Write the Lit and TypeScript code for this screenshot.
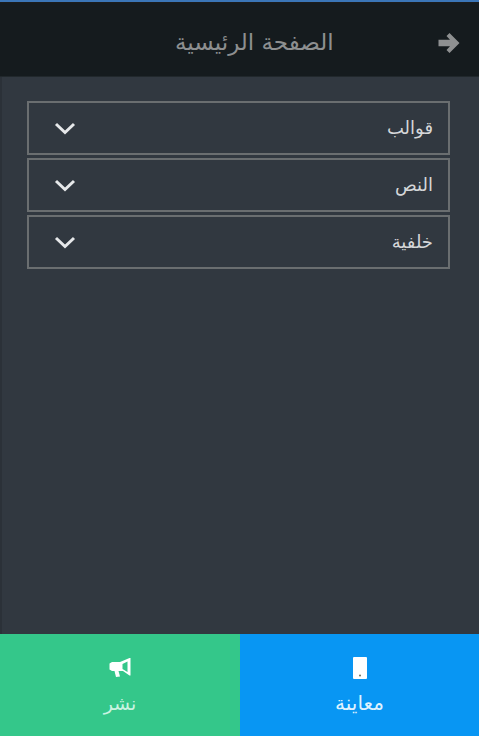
import { LitElement, html, css } from "lit";
import { customElement } from "lit/decorators.js";

const items = ["قوالب", "النص", "خلفية"];

@customElement("app-root")
export class AppRoot extends LitElement {
  static styles = css`
    :host {
      display: flex;
      flex-direction: column;
      height: 736px;
      width: 479px;
      overflow: hidden;
      background: #313840;
      font-family: "DejaVu Sans", "Noto Sans", sans-serif;
    }
    .topline {
      height: 2px;
      background: #3b76b8;
      flex: none;
      border-bottom: 1px solid #1c1d1d;
    }
    header {
      flex: none;
      height: 69px;
      background: #151b1e;
      border-bottom: 1px solid #21282c;
      display: flex;
      align-items: center;
      justify-content: space-between;
      padding: 4px 19px 0 175px;
    }
    header svg {
      margin-top: 3px;
    }
    .title {
      color: #8d8f90;
      font-size: 23px;
      line-height: 36px;
      white-space: nowrap;
    }
    main {
      flex: 1;
      padding: 24px 29px 0 25px;
      display: flex;
      flex-direction: column;
      gap: 3px;
      border-left: 2px solid #2b3138;
    }
    .row {
      height: 50px;
      border: 2px solid #6a6e70;
      display: flex;
      align-items: center;
      justify-content: space-between;
      padding: 0 15px 0 25px;
    }
    .row span {
      color: #d5d7d9;
      font-size: 18px;
      line-height: 26px;
    }
    footer {
      flex: none;
      height: 102px;
      display: flex;
    }
    .btn {
      flex: none;
      display: flex;
      flex-direction: column;
      align-items: center;
      padding-top: 21px;
      box-sizing: border-box;
    }
    .pub { width: 240px; background: #34c78a; color: #c9f3e1; }
    .pre { width: 239px; background: #0896f3; color: #dff2ff; }
    .icon { height: 26px; display: flex; align-items: center; justify-content: center; }
    .label { font-size: 19px; line-height: 28px; margin-top: 8px; }
    .pre .label { font-size: 20px; }
  `;

  render() {
    return html`
      <div class="topline"></div>
      <header>
        <span class="title" dir="rtl">الصفحة الرئيسية</span>
        <svg width="22" height="22" viewBox="0 0 22 22" aria-hidden="true">
          <path d="M11.5 1 L21.5 11 L11.5 21 L8.5 18 L12 14.2 H0.5 V7.8 H12 L8.5 4 Z" fill="#8e9091"/>
        </svg>
      </header>
      <main>
        ${items.map(
          (t) => html`<div class="row">
            <svg width="22" height="14" viewBox="0 0 22 14" aria-hidden="true">
              <path d="M2 3 L11 11.5 L20 3" fill="none" stroke="#e6e8ea" stroke-width="3"/>
            </svg>
            <span dir="rtl">${t}</span>
          </div>`
        )}
      </main>
      <footer>
        <div class="btn pub">
          <div class="icon">
            <svg width="22" height="22" viewBox="0 0 22 22" aria-hidden="true">
              <path d="M20.5 1 L21.5 1 V18.5 L20.5 18.5 L14 14 H9.5 L11 19.5 L7 20 L5.5 14 H3 L0.5 12.5 V6.5 L3 5 H11 Z M18.5 4.5 L13.5 7 V12 L18.5 15 Z" fill="#fff" fill-rule="evenodd"/>
            </svg>
          </div>
          <div class="label" dir="rtl">نشر</div>
        </div>
        <div class="btn pre">
          <div class="icon">
            <svg width="14" height="22" viewBox="0 0 14 22" aria-hidden="true">
              <path d="M1 0 H13 A1 1 0 0 1 14 1 V21 A1 1 0 0 1 13 22 H1 A1 1 0 0 1 0 21 V1 A1 1 0 0 1 1 0 Z" fill="#fff"/>
              <circle cx="7" cy="18.5" r="1" fill="#6f6a55"/>
            </svg>
          </div>
          <div class="label" dir="rtl">معاينة</div>
        </div>
      </footer>
    `;
  }
}
